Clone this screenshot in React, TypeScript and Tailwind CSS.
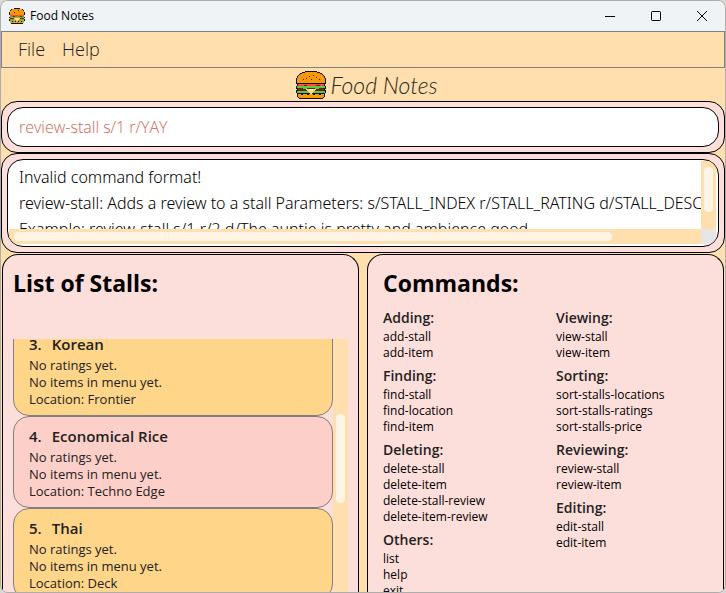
import type { ReactNode } from "react";

const BURGER_DOTS: [number, number][] = [
  [13, 5], [17, 4], [10, 7], [20, 6], [7, 8], [15, 8], [23, 8],
];

function Burger({ className }: { className: string }) {
  return (
    <svg className={className} viewBox="0 0 30 28" preserveAspectRatio="none" shapeRendering="crispEdges" aria-hidden="true">
      <path fill="#111" d="M9 0h12v1h3v1h2v1h1v1h1v1h1v2h1v6h-1v2h1v3h-1v1h1v3h-1v4h-1v1h-1v1H3v-1H2v-1H1v-4H0v-3h1v-1H0v-3h1v-2H0V7h1V5h1V4h1V3h1V2h2V1h3z" />
      <path fill="#f99806" d="M9 1h12v1h3v1h2v1h1v1h1v2h1v5H1V7h1V5h1V4h1V3h2V2h3z" />
      <path fill="#fb4b3c" d="M2 13h26v2H2z" />
      <path fill="#7a1d12" d="M8 14h3v1H8zM20 14h4v1h-4z" />
      <path fill="#58c83c" d="M1 15h28v2H1zM7 17h4v1H7zM19 17h4v1h-4z" />
      <path fill="#6e2114" d="M2 17h5v3H2zM7 18h4v2H7zM11 17h8v3h-8zM19 18h4v2h-4zM23 17h5v3h-5z" />
      <path fill="#58c83c" d="M1 20h28v2H1z" />
      <path fill="#ffd76a" d="M10 18h10v1h-1v1h-1v1h-1v1h-1v1h-2v-1h-1v-1h-1v-1h-1v-1h-1z" />
      <path fill="#fff1ae" d="M13 18h4v2h-4z" />
      <path fill="#f99806" d="M2 23h26v3h-1v1H3v-1H2z" />
      <path fill="#111" d="M5 23h2v1H5zM11 23h2v1h-2zM17 23h2v1h-2zM23 23h2v1h-2z" />
      {BURGER_DOTS.map(([x, y]) => (
        <rect key={`${x}-${y}`} x={x} y={y} width="1" height="1" fill="#222" />
      ))}
    </svg>
  );
}

function Frame({ children }: { children: ReactNode }) {
  return <div className="rounded-2xl border border-black bg-[#fcdeda] p-[5px]">{children}</div>;
}

const STALLS = [
  { id: 3, name: "Korean", location: "Frontier" },
  { id: 4, name: "Economical Rice", location: "Techno Edge" },
  { id: 5, name: "Thai", location: "Deck" },
];

const COMMANDS = [
  [
    { title: "Adding:", items: ["add-stall", "add-item"] },
    { title: "Finding:", items: ["find-stall", "find-location", "find-item"] },
    { title: "Deleting:", items: ["delete-stall", "delete-item", "delete-stall-review", "delete-item-review"] },
    { title: "Others:", items: ["list", "help", "exit"] },
  ],
  [
    { title: "Viewing:", items: ["view-stall", "view-item"] },
    { title: "Sorting:", items: ["sort-stalls-locations", "sort-stalls-ratings", "sort-stalls-price"] },
    { title: "Reviewing:", items: ["review-stall", "review-item"] },
    { title: "Editing:", items: ["edit-stall", "edit-item"] },
  ],
];

const RESULT = [
  "Invalid command format!",
  "review-stall: Adds a review to a stall Parameters: s/STALL_INDEX r/STALL_RATING d/STALL_DESCRIPTION",
  "Example: review-stall s/1 r/2 d/The auntie is pretty and ambience good",
].join("\n");

export default function App() {
  return (
    <div className="h-screen bg-[#d8d8d8] font-['Open_Sans','Noto_Sans',sans-serif] text-black">
      <div className="flex h-full flex-col overflow-hidden rounded-lg border border-[#adadad] bg-[#ffdfae]">
        <header className="flex h-[30px] shrink-0 items-center bg-[#f0f3f5] pl-2">
          <Burger className="h-4 w-4" />
          <span className="ml-[5px] grow text-xs">Food Notes</span>
          <button aria-label="Minimize" className="flex h-full w-[46px] items-center justify-center">
            <svg className="h-3 w-3" viewBox="0 0 12 12" fill="none" stroke="#000"><path d="M1 6.5h10" /></svg>
          </button>
          <button aria-label="Maximize" className="flex h-full w-[46px] items-center justify-center">
            <svg className="h-3 w-3" viewBox="0 0 12 12" fill="none" stroke="#000"><rect x="1.5" y="1.5" width="9" height="9" rx="1" /></svg>
          </button>
          <button aria-label="Close" className="flex h-full w-[46px] items-center justify-center">
            <svg className="h-3 w-3" viewBox="0 0 12 12" fill="none" stroke="#000"><path d="M1 1l10 10M11 1L1 11" /></svg>
          </button>
        </header>

        <nav className="flex h-[37px] shrink-0 items-center gap-[17px] border border-[#808080] px-4 pb-0.5 text-lg font-light text-[#222]">
          <button>File</button>
          <button>Help</button>
        </nav>

        <div className="flex h-[33px] shrink-0 items-center justify-center gap-1 pl-2">
          <Burger className="h-7 w-[30px]" />
          <h1 className="font-['Lato',sans-serif] text-[23px] font-light italic leading-7 text-[#2b2620]">Food Notes</h1>
        </div>

        <Frame>
          <input
            aria-label="Command"
            defaultValue="review-stall s/1 r/YAY"
            className="block h-10 w-full rounded-2xl border border-black bg-white px-[11px] text-base font-light text-[#d06651] outline-none"
          />
        </Frame>

        <Frame>
          <div className="grid h-[88px] grid-cols-[1fr_15px] grid-rows-[1fr_15px] overflow-hidden rounded-2xl border border-black bg-white p-px pr-0.5 pb-0.5">
            <textarea
              aria-label="Result"
              readOnly
              wrap="off"
              value={RESULT}
              className="block h-full w-full resize-none overflow-hidden px-[10px] pt-[3px] font-['Noto_Sans',sans-serif] text-base leading-[26px] font-light whitespace-pre outline-none"
            />
            <div className="bg-[#ffdfae] px-[3px] pt-[6px]">
              <div className="h-[45px] rounded-sm bg-[#fff4e5]" />
            </div>
            <div className="bg-[#ffdfae] py-[3px] pl-[5px]">
              <div className="h-full w-[87%] rounded-sm bg-[#fff4e5]" />
            </div>
            <div className="bg-[#e6e6e6]" />
          </div>
        </Frame>

        <main className="grid min-h-0 grow grid-cols-2 gap-2 px-px pt-px">
          <section className="flex min-h-0 flex-col rounded-t-2xl border border-b-0 border-black bg-[#fcdeda] px-[10px] pt-3">
            <h2 className="h-[72px] shrink-0 text-[23px] leading-8 font-bold">List of Stalls:</h2>
            <div className="flex min-h-0 grow overflow-hidden">
              <ol className="-mt-[15px] grow">
                {STALLS.map((stall) => (
                  <li
                    key={stall.id}
                    className="h-[92px] rounded-2xl border border-[#808080] bg-[#ffd58a] px-[15px] pt-[7px] text-[13px] leading-[17px] text-[#222] even:bg-[#fdcfc9]"
                  >
                    <h3 className="flex gap-[10px] pb-px text-[15px] leading-6 font-semibold">
                      <span>{stall.id}.</span>
                      <span>{stall.name}</span>
                    </h3>
                    <p>No ratings yet.</p>
                    <p>No items in menu yet.</p>
                    <p>Location: {stall.location}</p>
                  </li>
                ))}
              </ol>
              <div className="w-[15px] shrink-0 bg-[#ffdfae] px-[3px] pt-[75px]">
                <div className="h-[89px] rounded-sm bg-[#fff4e5]" />
              </div>
            </div>
          </section>

          <section className="min-h-0 overflow-hidden rounded-t-2xl border border-b-0 border-black bg-[#fcdeda] pt-3 pl-[15px]">
            <h2 className="text-[23px] leading-8 font-bold">Commands:</h2>
            <div className="mt-2 grid grid-cols-[173px_1fr]">
              {COMMANDS.map((column) => (
                <div key={column[0].title} className="flex flex-col gap-1">
                  {column.map((group) => (
                    <div key={group.title}>
                      <h3 className="text-sm leading-[22px] font-semibold text-[#222]">{group.title}</h3>
                      <ul className="text-xs leading-4">
                        {group.items.map((item) => (
                          <li key={item}>{item}</li>
                        ))}
                      </ul>
                    </div>
                  ))}
                </div>
              ))}
            </div>
          </section>
        </main>
      </div>
    </div>
  );
}
